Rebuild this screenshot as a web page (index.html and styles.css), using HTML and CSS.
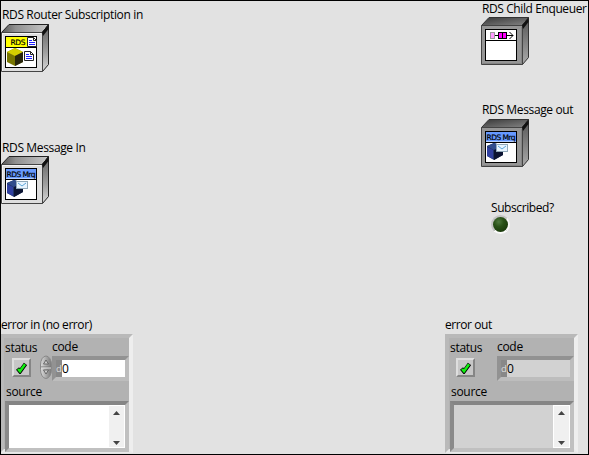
FILE: index.html
```
<!DOCTYPE html>
<html lang="en">
<head>
<meta charset="utf-8">
<title>RDS Front Panel</title>
<link rel="stylesheet" href="styles.css">
</head>
<body>
<svg class="defs" width="0" height="0" aria-hidden="true">
  <defs>
    <linearGradient id="topface" x1="0" x2="1" y1="0" y2="0"><stop offset="0" stop-color="#555"/><stop offset=".3" stop-color="#909090"/><stop offset="1" stop-color="#c8c8c8"/></linearGradient>
    <linearGradient id="sideface" x1="0" x2="0" y1="0" y2="1"><stop offset="0" stop-color="#606060"/><stop offset=".6" stop-color="#a0a0a0"/><stop offset="1" stop-color="#d8d8d8"/></linearGradient>
    <linearGradient id="topdark" x1="0" x2="1" y1="0" y2="1"><stop offset="0" stop-color="#383838"/><stop offset="1" stop-color="#858585"/></linearGradient>
    <linearGradient id="sidedark" x1="0" x2="0" y1="0" y2="1"><stop offset="0" stop-color="#555"/><stop offset="1" stop-color="#aaa"/></linearGradient>
    <g id="box-light">
      <path d="M0.5 8.5L8 .5H47.5L41.5 8.5Z" fill="url(#topface)" stroke="#222"/>
      <path d="M41.5 8.5L47.5 .5V40.5L41.5 47.5Z" fill="url(#sideface)" stroke="#222"/>
      <path d="M.5 8.5H41.5V47.5H.5Z" fill="#dedede" stroke="#444"/>
      <path d="M41 8L47.5 1V5L42 12Z" fill="#111"/>
      <path d="M1.5 47V9.500H40" fill="none" stroke="#f4f4f4"/>
    </g>
    <g id="box-dark">
      <path d="M.5 8.500L8 .5H47.500L41.500 8.500Z" fill="url(#topdark)" stroke="#333"/>
      <path d="M41.500 8.500L47.500 .5V40.500L41.500 47.500Z" fill="url(#sidedark)" stroke="#333"/>
      <path d="M.5 8.500H41.500V47.500H.5Z" fill="#969696" stroke="#444"/>
      <path d="M41 8L47.500 1V5L42 12Z" fill="#111"/>
      <path d="M1.500 46.500H40.500V10" fill="none" stroke="#858585"/>
    </g>
    <g id="message">
      <rect x="4.500" y="12.500" width="31" height="31" fill="#fff" stroke="#000"/>
      <rect x="5" y="13" width="30" height="9.500" fill="#6699ff"/>
      <path d="M4 23.500H36" stroke="#000"/>
      <text x="5.500" y="20.500" class="glyph-text" textLength="29">RDS Mrq</text>
      <path d="M6 27L13 24L22 27V36L13 41L6 37Z" fill="#203468"/>
      <path d="M6 27L13 24L22 27L13 31Z" fill="#304c8c"/>
      <path d="M13 31L22 27V36L13 41Z" fill="#0c1432"/>
      <path d="M6 28L12 31V40L6 37Z" fill="#3040a0"/>
      <rect x="15.500" y="25.500" width="11" height="7" fill="#e8f4ff" stroke="#91a9ba"/>
      <path d="M17 27L21 30L25 27" fill="none" stroke="#5ba4d8"/>
    </g>
    <g id="document">
      <path d="M.5.5H6.500L9.500 3.500V9.500H.5Z" fill="#fff" stroke="#222"/>
      <path d="M6.500.5V3.500H9.500" fill="none" stroke="#222"/>
      <path d="M2 3.500H5M2 5.500H8M2 7.500H8" stroke="#2020ff"/>
    </g>
    <g id="check">
      <path d="M1.500 6.500L4 9.500L9.500 2" fill="none" stroke="#000" stroke-width="4"/>
      <path d="M2 7L4 9.300L9 2.300" fill="none" stroke="#10f010" stroke-width="2.500"/>
    </g>
  </defs>
</svg>
<main class="panel">
  <section class="column">
    <div class="control router">
      <div class="label">RDS Router Subscription in</div>
      <svg class="object" viewBox="0 0 48 48">
        <use href="#box-light"/>
        <rect x="4.500" y="12.500" width="31" height="31" fill="#fff" stroke="#000"/>
        <rect x="5" y="13" width="21" height="10" fill="#ff0"/>
        <path d="M4 23.500H36" stroke="#000"/>
        <text x="9.500" y="20.500" class="glyph-text" textLength="15">RDS</text>
        <use href="#document" x="26" y="13"/>
        <use href="#document" x="23" y="27"/>
        <path d="M6 28L14 24L22 28V38L14 42L6 38Z" fill="#777500"/>
        <path d="M6 28L14 24L22 28L14 32Z" fill="#d4cf00"/>
        <path d="M14 32L22 28V38L14 42Z" fill="#28260c"/>
      </svg>
    </div>
    <div class="control message-in">
      <div class="label">RDS Message In</div>
      <svg class="object" viewBox="0 0 48 48"><use href="#box-light"/><use href="#message"/></svg>
    </div>
    <div class="error">
      <div class="label title">error in (no error)</div>
      <div class="cluster">
        <div class="row">
          <div class="status"><div class="label small">status</div><div class="button"><svg width="11" height="12"><use href="#check"/></svg></div></div>
          <div class="spin-slot">
            <svg width="12" height="25" viewBox="0 0 12 24"><defs><linearGradient id="spin"><stop stop-color="#ddd"/><stop offset=".5" stop-color="#aaa"/><stop offset="1" stop-color="#777"/></linearGradient></defs><rect x=".5" y=".5" width="11" height="22.500" rx="5.500" ry="9" fill="url(#spin)" stroke="#888"/><path d="M1 11.500H11" stroke="#777"/><path d="M1 12.500H11" stroke="#ddd"/><path d="M3.500 8.500L6 4.500L8.500 8.500ZM3.500 14.500L6 18.500L8.500 14.500Z" fill="#ccc" stroke="#555" stroke-width=".8"/></svg>
          </div>
          <div class="code"><div class="label small">code</div><div class="field"><span class="radix">d</span><span class="value">0</span></div></div>
        </div>
        <div class="label small source-label">source</div>
        <div class="source"><div class="scroll"><svg width="7" height="4"><path d="M0 4L3.500 0L7 4Z"/></svg><svg width="7" height="4"><path d="M0 0L3.500 4L7 0Z"/></svg></div></div>
      </div>
    </div>
  </section>
  <section class="column">
    <div class="control enqueuer">
      <div class="label">RDS Child Enqueuer</div>
      <svg class="object" viewBox="0 0 48 48">
        <use href="#box-dark"/>
        <rect x="4.500" y="12.500" width="31" height="31" fill="#fff" stroke="#000"/>
        <path d="M4 23.500H36" stroke="#000"/>
        <path d="M13 18.500H32M28.500 15L32 18.500L28.500 22" fill="none" stroke="#000"/>
        <rect x="9.500" y="15.500" width="4" height="6" fill="#ff99ff" stroke="#999"/>
        <rect x="17.500" y="15.500" width="4" height="6" fill="#f0f" stroke="#000"/>
        <rect x="21.500" y="15.500" width="4" height="6" fill="#f0f" stroke="#000"/>
      </svg>
    </div>
    <div class="control message-out">
      <div class="label">RDS Message out</div>
      <svg class="object" viewBox="0 0 48 48"><use href="#box-dark"/><use href="#message"/></svg>
    </div>
    <div class="control subscribed">
      <div class="label">Subscribed?</div>
      <div class="led"></div>
    </div>
    <div class="error">
      <div class="label title title-out">error out</div>
      <div class="cluster output">
        <div class="row">
          <div class="status"><div class="label small">status</div><div class="button"><svg width="11" height="12"><use href="#check"/></svg></div></div>
          <div class="spin-slot"></div>
          <div class="code"><div class="label small">code</div><div class="field"><span class="radix">d</span><span class="value">0</span></div></div>
        </div>
        <div class="label small source-label">source</div>
        <div class="source"><div class="scroll"><svg width="7" height="4"><path d="M0 4L3.500 0L7 4Z"/></svg><svg width="7" height="4"><path d="M0 0L3.500 4L7 0Z"/></svg></div></div>
      </div>
    </div>
  </section>
</main>
</body>
</html>
```
FILE: styles.css
```
* { box-sizing: border-box; }
body { margin: 0; font: 12px/16px "Open Sans", "Noto Sans", sans-serif; color: #000; }
svg { display: block; }
.defs { position: absolute; }
.panel {
  position: relative;
  display: grid;
  grid-template-columns: 445px 144px;
  width: 589px;
  height: 455px;
  overflow: hidden;
  background: #e2e2e2;
}
.panel::after { content: ""; position: absolute; inset: 0; border: 1px solid #000; pointer-events: none; }
.column { display: flex; flex-direction: column; height: 453px; }
.label { white-space: nowrap; letter-spacing: -0.36px; }
.object { width: 48px; height: 48px; }
.glyph-text { font: 7.5px "DejaVu Sans", sans-serif; stroke: #000; stroke-width: 0.2px; }
.router { padding: 7px 0 0 1px; }
.message-in { padding: 68px 0 0 1px; }
.message-in .label { height: 16px; }
.control .label { padding-left: 1px; }
.router .label, .message-out .label, .subscribed .label { height: 17px; }
.enqueuer { padding: 1px 0 0 36px; }
.enqueuer .label { height: 16px; letter-spacing: -0.4px; }
.message-out { padding: 37px 0 0 36px; }
.subscribed { padding: 33px 0 0 45px; }
.subscribed .label { letter-spacing: -0.42px; }
.error { margin-top: auto; }
.title { padding-left: 1px; height: 17px; letter-spacing: -0.42px; }
.title-out { padding-left: 0; }
.cluster {
  width: 133px;
  height: 119px;
  padding-left: 1px;
  border: 4px solid;
  border-color: #b9b9b9 #eeeeee #e9e9e9 #b9b9b9;
  background: #b2b2b2;
}
.row { display: flex; height: 43px; }
.status { width: 35px; padding-top: 3px; }
.small { line-height: 14px; height: 14px; letter-spacing: -0.3px; }
.button {
  display: grid;
  place-items: center;
  width: 19px;
  height: 19px;
  margin: 3px 0 0 7px;
  border: 2px solid;
  border-color: #dedede #858585 #858585 #dedede;
  background: #c7c7c7;
}
.output .button { margin-left: 6px; }
.spin-slot { width: 12px; padding-top: 17px; }
.code { width: 77px; padding-top: 2px; }
.field {
  display: flex;
  width: 77px;
  height: 25px;
  margin-top: 2px;
  border: 4px solid;
  border-color: #929292 #bdbdbd #bdbdbd #929292;
  line-height: 17px;
  background: #fff;
}
.radix { width: 6px; font-size: 9.5px; color: #ddd; background: #888; }
.source-label { margin-top: 4px; padding-left: 1px; }
.source {
  display: flex;
  justify-content: flex-end;
  width: 124px;
  height: 51px;
  margin-top: 2px;
  border: 4px solid;
  border-color: #858585 #c0c0c0 #c0c0c0 #8a8a8a;
  background: #fff;
}
.scroll {
  display: flex;
  flex-direction: column;
  align-items: center;
  justify-content: space-between;
  width: 17px;
  padding: 5px 0 2px;
  border: 1px solid #fff;
  background: #f0f0f0;
  fill: #444;
}
.output .field, .output .source { background: #d2d2d2; }
.led {
  width: 19px;
  height: 19px;
  margin: -2px 0 0 1px;
  border: 2px solid;
  border-color: #c4c4c4 #f6f6f6 #fafafa #c4c4c4;
  border-radius: 50%;
  background: radial-gradient(circle at 38% 32%, #4f793e 0, #2a5218 35%, #1b3b0c 75%, #4a5c40 100%);
}
```
